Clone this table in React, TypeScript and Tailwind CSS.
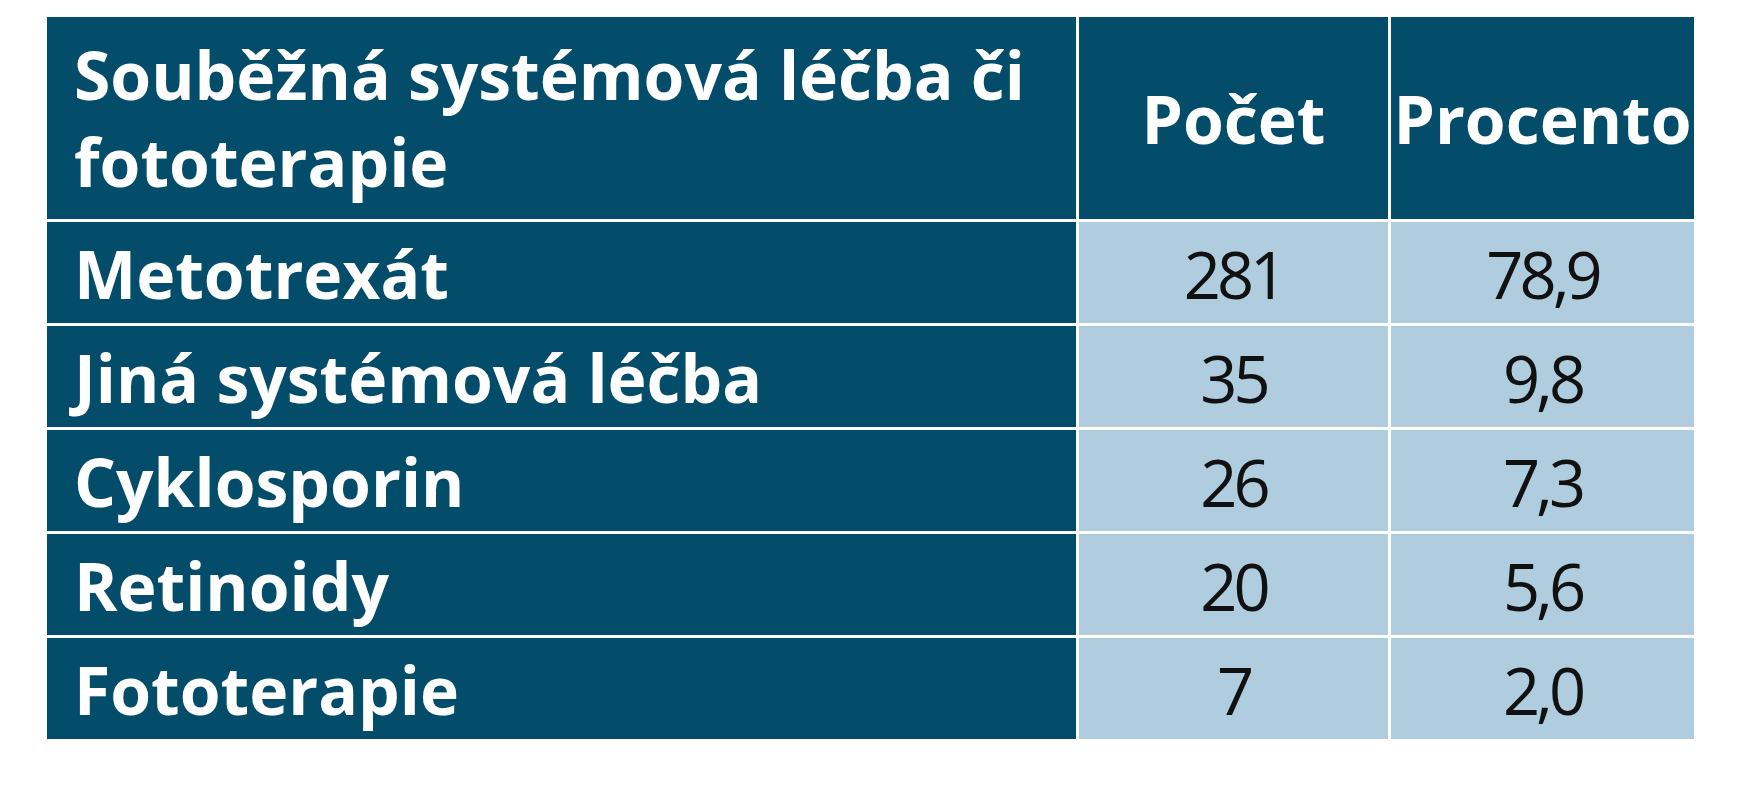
import React from "react";

const rows: [string, string, string][] = [
  ["Metotrexát", "281", "78,9"],
  ["Jiná systémová léčba", "35", "9,8"],
  ["Cyklosporin", "26", "7,3"],
  ["Retinoidy", "20", "5,6"],
  ["Fototerapie", "7", "2,0"],
];

export default function App() {
  return (
    <div className="w-[1762px] h-[800px] bg-white pl-[47px] pt-[17px] font-['Open_Sans',sans-serif]">
      <div className="grid grid-cols-[1029px_309px_303px] grid-rows-[202px_101px_101px_101px_101px_101px] gap-[3px] bg-white w-[1647px]">
        <div className="bg-[#034c6a] text-white font-bold text-[66px] leading-[87px] pl-[27px] flex items-center">
          <span>
            Souběžná systémová léčba či
            <br />
            fototerapie
          </span>
        </div>
        <div className="bg-[#034c6a] text-white font-bold text-[66px] flex items-center justify-center">
          Počet
        </div>
        <div className="bg-[#034c6a] text-white font-bold text-[66px] flex items-center justify-center">
          Procento
        </div>
        {rows.map(([label, n, p]) => (
          <React.Fragment key={label}>
            <div className="bg-[#034c6a] text-white font-bold text-[66px] leading-none pl-[27px] flex items-center">
              {label}
            </div>
            <div className="bg-[#afcddf] text-[#111111] font-normal text-[65px] leading-none tracking-[-4px] flex items-center justify-center pt-[4px]">
              {n}
            </div>
            <div className="bg-[#afcddf] text-[#111111] font-normal text-[65px] leading-none tracking-[-4px] flex items-center justify-center pt-[4px]">
              {p}
            </div>
          </React.Fragment>
        ))}
      </div>
    </div>
  );
}
